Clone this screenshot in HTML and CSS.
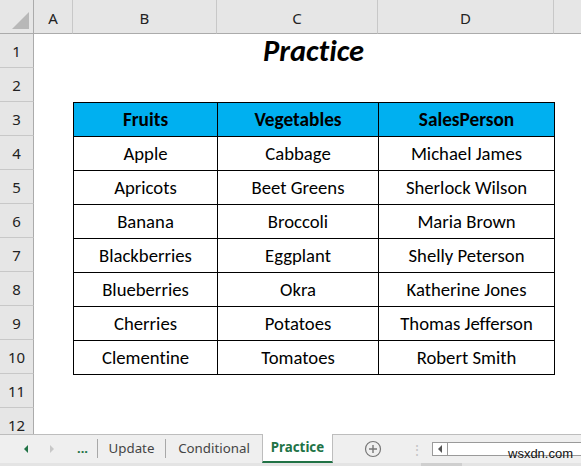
FILE: index.html
```html
<!DOCTYPE html>
<html>
<head>
<meta charset="utf-8">
<link rel="stylesheet" href="styles.css">
</head>
<body>
<div class="app">
  <div class="sheet">
    <div class="corner"><span class="tri"></span></div>
    <div class="colh">A</div>
    <div class="colh">B</div>
    <div class="colh">C</div>
    <div class="colh">D</div>
    <div class="colh last"></div>

    <div class="rowh r1">1</div>
    <div class="rowh r2">2</div>
    <div class="rowh r3">3</div>
    <div class="rowh r4">4</div>
    <div class="rowh r5">5</div>
    <div class="rowh r6">6</div>
    <div class="rowh r7">7</div>
    <div class="rowh r8">8</div>
    <div class="rowh r9">9</div>
    <div class="rowh r10">10</div>
    <div class="rowh r11">11</div>
    <div class="rowh r12">12</div>

    <div class="title">Practice</div>

    <table class="data">
      <thead>
        <tr><th>Fruits</th><th>Vegetables</th><th>SalesPerson</th></tr>
      </thead>
      <tbody>
        <tr><td>Apple</td><td>Cabbage</td><td>Michael James</td></tr>
        <tr><td>Apricots</td><td>Beet Greens</td><td>Sherlock Wilson</td></tr>
        <tr><td>Banana</td><td>Broccoli</td><td>Maria Brown</td></tr>
        <tr><td>Blackberries</td><td>Eggplant</td><td>Shelly Peterson</td></tr>
        <tr><td>Blueberries</td><td>Okra</td><td>Katherine Jones</td></tr>
        <tr><td>Cherries</td><td>Potatoes</td><td>Thomas Jefferson</td></tr>
        <tr><td>Clementine</td><td>Tomatoes</td><td>Robert Smith</td></tr>
      </tbody>
    </table>
  </div>

  <div class="tabbar">
    <div class="navs">
      <svg class="nav" width="8" height="10" viewBox="0 0 8 10"><path d="M6 1 L2 5 L6 9 Z" fill="#217346"/></svg>
      <svg class="nav" width="8" height="10" viewBox="0 0 8 10"><path d="M2 1 L6 5 L2 9 Z" fill="#c8c8c8"/></svg>
      <span class="dots">...</span>
    </div>
    <div class="tab sep">Update</div>
    <div class="tab sep">Conditional</div>
    <div class="tab active">Practice</div>
    <div class="add">
      <svg width="18" height="18" viewBox="0 0 18 18"><circle cx="9" cy="9" r="7.5" fill="none" stroke="#777" stroke-width="1.2"/><path d="M9 5 V13 M5 9 H13" stroke="#777" stroke-width="1.4"/></svg>
    </div>
    <div class="grip">⋮</div>
    <div class="hscroll">
      <div class="hbtn"><svg width="6" height="8" viewBox="0 0 6 8"><path d="M5 0 L1 4 L5 8 Z" fill="#555"/></svg></div>
      <div class="htrack"></div>
    </div>
    <div class="wm">wsxdn.com</div>
  </div>
  <div class="bottom"><span class="thumb"></span></div>
</div>
</body>
</html>
```
FILE: styles.css
```css
* { box-sizing: border-box; }
html, body { margin: 0; padding: 0; }
body { width: 581px; height: 466px; overflow: hidden; background: #fff; }

.app { width: 581px; height: 466px; display: flex; flex-direction: column; }

.sheet {
  height: 434px;
  overflow: hidden;
  display: grid;
  grid-template-columns: 34px 39px 144px 161px 176px 27px;
  grid-template-rows: repeat(13, 34px);
  font-family: "Noto Sans", "Open Sans", sans-serif;
  flex: none;
}

.corner {
  grid-column: 1; grid-row: 1;
  background: #e6e6e6;
  border-right: 1px solid #ababab;
  border-bottom: 1px solid #ababab;
  position: relative;
}
.corner .tri {
  position: absolute; right: 4px; bottom: 4px;
  width: 0; height: 0;
  border-left: 17px solid transparent;
  border-bottom: 17px solid #b8b8b8;
}

.colh {
  grid-row: 1;
  background: #e6e6e6;
  border-bottom: 1px solid #ababab;
  border-right: 1px solid #c8c8c8;
  display: flex; align-items: center; justify-content: center;
  font-size: 15px; color: #222;
  padding-top: 2px;
}
.colh.last { border-right: none; }

.rowh {
  grid-column: 1;
  background: #e6e6e6;
  border-right: 1px solid #ababab;
  border-bottom: 1px solid #c8c8c8;
  display: flex; align-items: center; justify-content: center;
  font-size: 15px; color: #222;
  padding-top: 1px;
}
.r1 { grid-row: 2; } .r2 { grid-row: 3; } .r3 { grid-row: 4; } .r4 { grid-row: 5; }
.r5 { grid-row: 6; } .r6 { grid-row: 7; } .r7 { grid-row: 8; } .r8 { grid-row: 9; }
.r9 { grid-row: 10; } .r10 { grid-row: 11; } .r11 { grid-row: 12; } .r12 { grid-row: 13; }

.title {
  grid-column: 3 / 6; grid-row: 2;
  display: flex; align-items: center; justify-content: center;
  font-family: Carlito, Lato, "Open Sans", sans-serif;
  font-weight: 700; font-style: italic;
  font-size: 30.5px; color: #000;
  font-variant-ligatures: none;
  padding-bottom: 2px;
}

.data {
  grid-column: 3 / 6; grid-row: 4 / 12;
  border-collapse: collapse;
  width: 482px;
  height: 273px;
  font-family: Carlito, Lato, "Open Sans", sans-serif;
  font-size: 18.7px; color: #000;
  font-variant-ligatures: none;
  table-layout: fixed;
}
.data th, .data td {
  border: 1px solid #000;
  text-align: center;
  padding: 0;
  height: 34px;
}
.data th:nth-child(1), .data td:nth-child(1) { width: 144px; }
.data th:nth-child(2), .data td:nth-child(2) { width: 161px; }
.data th { background: #00b0f0; font-weight: 700; font-size: 19.3px; }

.tabbar {
  height: 29px;
  flex: none;
  background: #efefef;
  border-top: 1px solid #bdbdbd;
  display: flex; align-items: stretch;
  font-family: "Noto Sans", "Open Sans", sans-serif;
  font-size: 13.3px; color: #444;
  position: relative;
}
.navs {
  width: 97px;
  display: flex; align-items: center;
  padding-left: 22px;
  gap: 18px;
}
.dots { color: #217346; font-weight: 700; font-size: 13px; margin-left: 3px; padding-bottom: 2px; }
.tab {
  display: flex; align-items: center; justify-content: center;
  padding: 0 14px 2px;
}
.tab.sep { border-left: 1px solid #a8a8a8; margin: 4px 0 5px; }
.tab.sep:nth-of-type(2) { width: 68px; }
.tab.sep:nth-of-type(3) { width: 97px; }
.tab.active {
  width: 71px;
  margin-top: -1px;
  background: #fff;
  border-bottom: 2px solid #217346;
  border-left: 1px solid #bdbdbd;
  border-right: 1px solid #bdbdbd;
  color: #217346; font-weight: 700;
  padding: 0 0 1px;
}
.add { width: 80px; display: flex; align-items: center; justify-content: center; }
.grip { width: 22px; color: #c4c4c4; display: flex; align-items: center; justify-content: flex-start; font-size: 14px; margin-left: -3px; }
.hscroll { flex: 1; display: flex; margin: 7px 0 7px 0; background: #fff; border: 1px solid #9a9a9a; border-right: none; }
.hbtn { width: 15px; border-right: 1px solid #9a9a9a; display: flex; align-items: center; justify-content: center; }
.htrack { flex: 1; }
.wm {
  position: absolute; left: 508px; top: 11px;
  font-family: "Liberation Sans", Arial, sans-serif;
  font-size: 13px; color: #111;
}
.bottom { flex: 1; background: #e4e4e4; position: relative; }
.thumb { position: absolute; left: 421px; top: 0; width: 41px; height: 100%; background: #cfcfcf; }
```
